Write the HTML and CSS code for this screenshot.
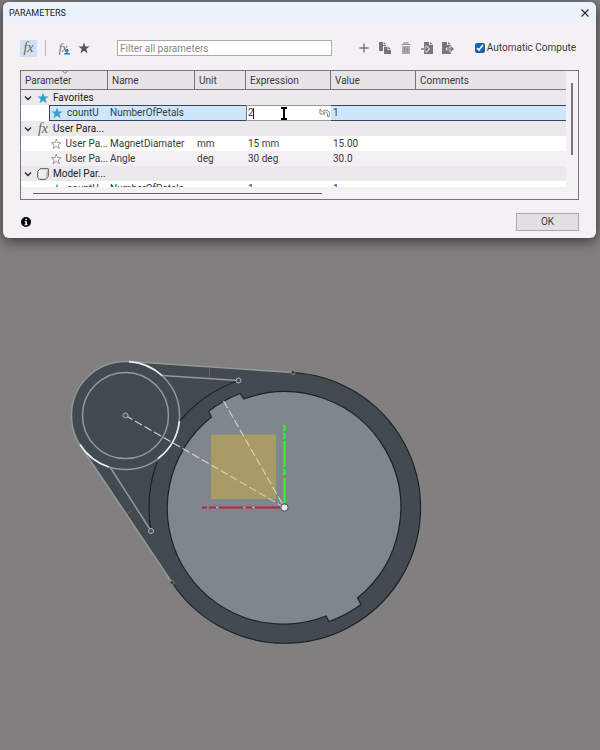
FILE: index.html
```
<!DOCTYPE html>
<html lang="en">
<head>
    <meta charset="UTF-8">
    <meta name="viewport" content="width=device-width, initial-scale=1.0">
    <title>Parameters</title>
    <link rel="stylesheet" href="styles.css">
</head>
<body>

    <!-- shared icons -->
    <svg class="defs" aria-hidden="true">
      <symbol id="star" viewBox="0 0 12 12"><path d="M6 .4 7.400 4.400 11.600 4.500 8.300 7.100 9.500 11.200 6 8.800 2.500 11.200 3.700 7.100 .4 4.500 4.600 4.400z"/></symbol>
      <symbol id="chevron" viewBox="0 0 8 8"><path d="M1 2.500 4 5.500 7 2.500" fill="none" stroke="#222" stroke-width="1.300"/></symbol>
    </svg>

    <section class="dialog" role="dialog" aria-labelledby="title">
      <header class="title-bar">
        <h1 id="title">PARAMETERS</h1>
        <button class="icon-btn" aria-label="Close">
          <svg width="10" height="10" viewBox="0 0 10 10"><path d="M1.500 1.500l7 7M8.500 1.500l-7 7" stroke="#222" stroke-width="1.100"/></svg>
        </button>
      </header>

      <div class="toolbar">
        <div class="filters">
          <button class="icon-btn fx active" aria-label="All parameters">fx</button>
          <span class="divider"></span>
          <button class="icon-btn fx user" aria-label="User parameters">fx
            <svg class="person" width="6" height="7" viewBox="0 0 8 8" fill="#1a7fc0"><circle cx="4" cy="2.300" r="2"/><path d="M3 4h2v1.500l3 1V8H0V6.500l3-1z"/></svg>
          </button>
          <button class="icon-btn" aria-label="Favorites">
            <svg width="12" height="12" fill="#555"><use href="#star"/></svg>
          </button>
        </div>
        <input class="search" type="text" aria-label="Filter all parameters" placeholder="Filter all parameters">
        <div class="actions">
          <button class="icon-btn" aria-label="Add">
            <svg width="12" height="12" viewBox="0 0 12 12"><path d="M6 1.500v9M1.500 6h9" stroke="#777" stroke-width="1.400"/></svg>
          </button>
          <button class="icon-btn" aria-label="Copy">
            <svg width="12" height="12" viewBox="0 0 12 12" fill="#777"><path d="M0 0h4v3h3v1H4v5H0zM4.800 0 7 2.200H4.800z"/><path d="M5 4.800h3.500V8H12v4H5zM9.300 4.500 12 7.200H9.300z"/></svg>
          </button>
          <button class="icon-btn" aria-label="Delete">
            <svg width="12" height="12" viewBox="0 0 12 12"><path d="M1.500 2.500h9M4 2V.8h4V2" fill="none" stroke="#999" stroke-width="1.200"/><path d="M2 4h8v8H2z" fill="#aaa"/><path d="M4.500 5.500v5M7.500 5.500v5" stroke="#888"/></svg>
          </button>
          <button class="icon-btn" aria-label="Import">
            <svg width="12" height="12" viewBox="0 0 12 12"><path d="M3 0h5v3h4v9H3zM9 0l3 2.300H9z" fill="#777"/><path d="M0 7h7M4.500 4l3 3-3 3" fill="none" stroke="#f3f1f4" stroke-width="2.400"/><path d="M0 7h7M4.500 4.500 7 7 4.500 9.500" fill="none" stroke="#777" stroke-width="1.300"/></svg>
          </button>
          <button class="icon-btn" aria-label="Export">
            <svg width="12" height="12" viewBox="0 0 12 12"><path d="M0 0h5v3h4v9H0zM6 0l3 2.300H6z" fill="#777"/><path d="M4 7h8M8 4l3 3-3 3" fill="none" stroke="#f3f1f4" stroke-width="2.400"/><path d="M5 7h6M8.500 4.500 11 7 8.500 9.500" fill="none" stroke="#777" stroke-width="1.300"/></svg>
          </button>
        </div>
        <label class="auto">
          <input type="checkbox" checked>
          Automatic Compute
        </label>
      </div>

      <div class="grid">
        <div class="grid-view">
          <table>
            <colgroup>
              <col class="col-param">
              <col class="col-name">
              <col class="col-unit">
              <col class="col-value">
              <col class="col-value">
              <col>
            </colgroup>
            <thead>
              <tr>
                <th class="sorted">Parameter
                  <svg class="sort" width="6" height="3" viewBox="0 0 6 3"><path d="M.5 0 3 2.500 5.500 0" fill="none" stroke="#777"/></svg>
                </th>
                <th>Name</th>
                <th>Unit</th>
                <th>Expression</th>
                <th>Value</th>
                <th>Comments</th>
              </tr>
            </thead>
            <tbody>
              <tr class="group">
                <td colspan="6">
                  <div class="group-label">
                    <button class="icon-btn" aria-label="Collapse Favorites"><svg width="8" height="8"><use href="#chevron"/></svg></button>
                    <span class="group-icon"><svg width="12" height="12" fill="#3c9dcc"><use href="#star"/></svg></span>
                    Favorites
                  </div>
                </td>
              </tr>
              <tr class="selected">
                <td class="param"><div class="leaf"><svg width="12" height="12" fill="#3c9dcc"><use href="#star"/></svg><span>countU</span></div></td>
                <td>NumberOfPetals</td>
                <td></td>
                <td class="editing">
                  <div class="editor">
                    <input type="text" aria-label="Expression" value="2">
                    <button class="icon-btn" aria-label="Undo">
                      <svg width="12" height="10" viewBox="0 0 12 10" fill="none" stroke="#666" stroke-width=".8"><path d="M1 1v5h5L4.500 4.500C7 3 9 4.500 8.500 8.500L10 9c2.500-5-2-9-7-5.500z"/></svg>
                    </button>
                    <span class="caret"></span>
                    <svg class="pointer" width="8" height="13" viewBox="0 0 8 13"><path d="M1 1h2.200L4 1.600 4.800 1H7M4 1.500v10M1 12h2.200L4 11.400l.8.6H7" fill="none" stroke="#000" stroke-width="1.900"/></svg>
                  </div>
                </td>
                <td>1</td>
                <td></td>
              </tr>
              <tr class="group">
                <td colspan="6">
                  <div class="group-label">
                    <button class="icon-btn" aria-label="Collapse User Parameters"><svg width="8" height="8"><use href="#chevron"/></svg></button>
                    <span class="group-icon fx">fx</span>
                    User Para...
                  </div>
                </td>
              </tr>
              <tr>
                <td class="param"><div class="leaf outline"><svg width="12" height="12"><use href="#star"/></svg><span>User Pa...</span></div></td>
                <td>MagnetDiamater</td>
                <td>mm</td>
                <td>15 mm</td>
                <td>15.00</td>
                <td></td>
              </tr>
              <tr class="alt">
                <td class="param"><div class="leaf outline"><svg width="12" height="12"><use href="#star"/></svg><span>User Pa...</span></div></td>
                <td>Angle</td>
                <td>deg</td>
                <td>30 deg</td>
                <td>30.0</td>
                <td></td>
              </tr>
              <tr class="group">
                <td colspan="6">
                  <div class="group-label">
                    <button class="icon-btn" aria-label="Collapse Model Parameters"><svg width="8" height="8"><use href="#chevron"/></svg></button>
                    <span class="group-icon"><svg width="12" height="12" viewBox="0 0 12 12"><path d="M.7 3.500 3 .7h8.300v7.500L9 11.300H2.500L.7 9.500z" fill="#eee" stroke="#555"/><path d="M9 3.500h2v5L9 11z" fill="#bbb"/></svg></span>
                    Model Par...
                  </div>
                </td>
              </tr>
              <tr>
                <td class="param"><div class="leaf"><svg width="12" height="12" fill="#3c9dcc"><use href="#star"/></svg><span>countU</span></div></td>
                <td>NumberOfPetals</td>
                <td></td>
                <td>1</td>
                <td>1</td>
                <td></td>
              </tr>
            </tbody>
          </table>
        </div>
        <div class="scroll-y"></div>
        <div class="scroll-x"></div>
      </div>

      <footer class="dialog-footer">
        <button class="icon-btn" aria-label="Information">
          <svg width="10" height="10" viewBox="0 0 10 10"><circle cx="5" cy="5" r="5"/><path d="M4.300 1.700h1.600v1.500H4.300zM3.600 4.200h2.300v3h.7v1H3.500v-1h.8v-2h-.7z" fill="#fff"/></svg>
        </button>
        <button class="ok">OK</button>
      </footer>
    </section>

    <!-- sketch viewport -->
    <svg class="sketch" viewBox="0 238 600 512" role="img" aria-label="Sketch of a ring with a side lug">
      <defs>
        <linearGradient id="body" x1="0" y1="0" x2="1" y2="1">
          <stop offset="0" stop-color="#414a50"/>
          <stop offset="1" stop-color="#444b50"/>
        </linearGradient>
      </defs>
      <path d="M129 361.500 293 372.500A135.500 135.500 0 1 1 172 582.500L80 445A54 54 0 0 1 129 361.500z" fill="url(#body)"/>
      <path d="M293 372.500A135.500 135.500 0 1 1 172 582.500" fill="none" stroke="#1b2328" stroke-width="1.200"/>
      <path d="M238.500 380.500A135.500 135.500 0 0 0 179 422M157 462A135.500 135.500 0 0 0 151 531" fill="none" stroke="#1b2328" stroke-width="1.200"/>
      <path d="M211.500 417 208.500 411.500A122.500 122.500 0 0 1 240 393.500L244 399A116 116 0 0 1 357.500 598L361 604.500A122.500 122.500 0 0 1 329 621.500L326 616A116 116 0 0 1 211.500 417z" fill="#7f868c" stroke="#1b2328" stroke-width="1.200"/>
      <path d="M211 434.500h65v64.500h-65z" fill="#a99b66"/>

      <g fill="none" stroke="#92989a" stroke-width="1.500">
        <circle cx="125.500" cy="415.500" r="54"/>
        <circle cx="125.500" cy="415.500" r="43"/>
        <path d="M129 361.500 293 372.500M80 445 172 582.500"/>
        <path d="M162 375.500 238.500 380.500M110 467 151 531"/>
      </g>
      <path d="M129 361.600A54 54 0 0 1 162 375.500M179.400 421A54 54 0 0 1 158 458.500M80 444.500A54 54 0 0 0 109 467" fill="none" stroke="#e8eced" stroke-width="1.600"/>
      <path d="M209.500 368v9M127 514l5-4" stroke="#9a5a30" stroke-width="1"/>

      <g stroke="#d3d3cf" stroke-width="1.100" stroke-dasharray="8 3">
        <path d="M125.500 415.500 284.500 507.500"/>
        <path d="M223.500 401 284.500 507.500"/>
      </g>
      <path d="M284.500 425v6M284.500 433v6M284.500 441v26M284.500 469v6M284.500 478v25" stroke="#2df52d" stroke-width="2.400"/>
      <path d="M202 507.500h5M209 507.500h7M219 507.500h24M245 507.500h8M255 507.500h25" stroke="#c6203c" stroke-width="2"/>
      <path d="M216 507.500h2M243.500 507.500h2M252 507.500h2" stroke="#c5bcae" stroke-width="1.200"/>

      <g fill="#4b5359" stroke="#aeb3b5" stroke-width="1">
        <circle cx="125.500" cy="415.500" r="2.500"/>
        <circle cx="238.500" cy="380.500" r="2.500"/>
        <circle cx="151" cy="531" r="2.500"/>
        <circle cx="293" cy="372.500" r="2" fill="#343c41" stroke="#7b8285"/>
        <circle cx="172" cy="582.500" r="2" fill="#343c41" stroke="#7b8285"/>
      </g>
      <circle cx="284.500" cy="507.500" r="3.600" fill="#e8e6e9" stroke="#555"/>
    </svg>

</body>
</html>
```
FILE: styles.css
```
:root {
  --text: #3a3a3a;
  --line: #77757a;
  --panel: #f3f1f4;
  --group: #ebe9ec;
  --select: #cce6fb;
  --select-line: #34455c;
}

* {
  box-sizing: border-box;
}

body {
  margin: 0;
  padding-top: 2px;
  min-height: 100vh;
  background: #827f80;
  color: var(--text);
  font-family: Roboto, "Noto Sans", sans-serif;
  font-size: 10px;
  line-height: 14px;
}

button,
input {
  font: inherit;
  color: inherit;
  margin: 0;
}

.defs {
  display: none;
}

.icon-btn {
  display: flex;
  align-items: center;
  justify-content: center;
  padding: 0;
  border: 0;
  background: none;
  flex: none;
}

.fx {
  font-family: "Liberation Serif", serif;
  font-style: italic;
  font-size: 14px;
  color: #666;
}

/* dialog */

.dialog {
  margin: 0 4px 0 3px;
  border-radius: 6px;
  background: var(--panel);
  box-shadow: 0 3px 14px rgba(0, 0, 0, 0.6);
  overflow: hidden;
}

.title-bar {
  display: flex;
  align-items: center;
  justify-content: space-between;
  height: 22px;
  padding: 0 6px;
  background: #ecf2fa;
}

.title-bar h1 {
  margin: 0;
  font-size: 9px;
  font-weight: 400;
  color: #222;
}

.toolbar {
  display: flex;
  align-items: center;
  height: 46px;
  padding: 2px 20px 0 17px;
}

.filters {
  display: flex;
  align-items: center;
  width: 97px;
}

.filters .active {
  width: 17px;
  height: 17px;
  background: #cfe1ef;
}

.divider {
  width: 1px;
  height: 16px;
  margin: 0 11px 0 8px;
  background: #bbb;
}

.filters .user {
  position: relative;
  width: 12px;
  margin-right: 9px;
  font-size: 12px;
}

.person {
  position: absolute;
  right: -1px;
  bottom: 0;
}

.search {
  flex: 1;
  min-width: 0;
  height: 16px;
  padding: 0 2px;
  border: 1px solid #aaa;
  background: #fff;
}

.search::placeholder {
  color: #888;
}

.actions {
  display: flex;
  gap: 9px;
  margin: 0 21px 0 26px;
}

.auto {
  display: flex;
  align-items: center;
  gap: 2px;
  white-space: nowrap;
}

.auto input {
  width: 10px;
  height: 10px;
  accent-color: #1c63b0;
}

/* parameter table */

.grid {
  display: grid;
  grid-template-columns: 1fr 12px;
  grid-template-rows: 116px 12px;
  margin: 0 17px;
  border: 1px solid var(--line);
}

.grid-view {
  overflow: hidden;
  background: #fff;
}

table {
  width: 100%;
  table-layout: fixed;
  border-collapse: separate;
  border-spacing: 0;
}

.col-param,
.col-name {
  width: 87px;
}

.col-unit {
  width: 51px;
}

.col-value {
  width: 85px;
}

th {
  height: 19px;
  padding: 2px 4px 0;
  border-right: 1px solid var(--line);
  border-bottom: 1px solid var(--line);
  background: #e6e4e7;
  font-weight: 400;
  text-align: left;
}

th:last-child {
  border-right: 0;
}

.sorted {
  position: relative;
}

.sort {
  position: absolute;
  top: 0;
  left: 41px;
}

td {
  height: 15px;
  padding: 1px 2px 0;
  line-height: 14px;
  white-space: nowrap;
}

.group td {
  padding: 0;
  background: var(--group);
}

.alt td {
  background: var(--panel);
}

.group-label {
  display: flex;
  align-items: center;
  height: 15px;
  padding-left: 2px;
  color: #222;
}

.group-label .icon-btn {
  width: 10px;
}

.group-icon {
  display: flex;
  justify-content: center;
  width: 16px;
  margin: 0 2px;
}

td.param {
  padding: 0 0 0 28px;
}

.leaf {
  display: flex;
  align-items: center;
  gap: 4px;
  height: 15px;
  padding-left: 2px;
}

.outline svg {
  fill: #fff;
  stroke: #777;
  stroke-width: 0.8px;
}

.selected td {
  height: 16px;
  padding-top: 0;
  border: solid var(--select-line);
  border-width: 1px 0;
  background: var(--select);
}

.selected td.param {
  border: 0;
  background: #fff;
}

.selected .leaf {
  height: 16px;
  padding-left: 1px;
  border: 1px solid var(--select-line);
  border-right: 0;
  background: var(--select);
}

.selected td.editing {
  padding: 0;
  border-color: #999;
  background: #fff;
}

.editor {
  position: relative;
  display: flex;
  align-items: center;
  height: 14px;
  border-left: 1px solid #777;
}

.editor input {
  flex: 1;
  min-width: 0;
  height: 14px;
  padding: 0 1px;
  border: 0;
  background: none;
  outline: 0;
}

.caret {
  position: absolute;
  top: 2px;
  left: 6px;
  width: 1px;
  height: 11px;
  background: #222;
}

.pointer {
  position: absolute;
  top: 1px;
  left: 33px;
}

.scroll-y {
  justify-self: center;
  width: 2px;
  height: 72px;
  margin-top: 12px;
  background: #77757a;
}

.scroll-x {
  align-self: center;
  width: 53%;
  height: 1px;
  margin-left: 12px;
  background: #66646a;
}

.dialog-footer {
  display: flex;
  align-items: center;
  justify-content: space-between;
  padding: 13px 17px 7px 18px;
}

.ok {
  width: 63px;
  height: 18px;
  padding: 0;
  border: 1px solid #aaa;
  background: #e2e0e3;
}

/* viewport */

.sketch {
  display: block;
  width: 100%;
}
```
